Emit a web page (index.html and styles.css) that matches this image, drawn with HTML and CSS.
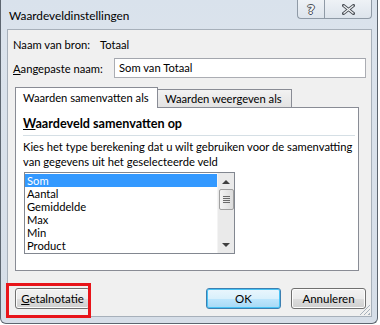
FILE: index.html
```html
<!DOCTYPE html>
<html lang="nl">
<head>
  <meta charset="UTF-8" />
  <title>Waardeveldinstellingen</title>
  <link rel="stylesheet" href="styles.css">
</head>
<body>
  <div class="window">
    <div class="titlebar">
      <span class="title">Waardeveldinstellingen</span>
      <div class="caption-buttons">
        <div class="cap-btn help">?</div>
        <div class="cap-btn close">
          <svg width="13" height="11" viewBox="0 0 13 11">
            <path d="M1.5 1.5 L11.5 9.5 M11.5 1.5 L1.5 9.5" stroke="#4a4f56" stroke-width="3" stroke-linecap="square"/>
            <path d="M1.5 1.5 L11.5 9.5 M11.5 1.5 L1.5 9.5" stroke="#f4f6f8" stroke-width="1.2"/>
          </svg>
        </div>
      </div>
    </div>

    <div class="client">
      <div class="row">
        <span class="label">Naam van bron:</span>
        <span class="value">Totaal</span>
      </div>
      <div class="row name-row">
        <span class="label"><u>A</u>angepaste naam:</span>
        <div class="textbox">Som van Totaal</div>
      </div>

      <div class="tabs">
        <div class="tab active">Waarden samenvatten als</div>
        <div class="tab">Waarden weergeven als</div>
      </div>
      <div class="panel">
        <div class="group-title"><u>W</u>aardeveld samenvatten op</div>
        <div class="separator"></div>
        <p class="desc">Kies het type berekening dat u wilt gebruiken voor de samenvatting<br>van gegevens uit het geselecteerde veld</p>
        <div class="listbox">
          <ul class="items">
            <li class="selected">Som</li>
            <li>Aantal</li>
            <li>Gemiddelde</li>
            <li>Max</li>
            <li>Min</li>
            <li>Product</li>
          </ul>
          <div class="scrollbar">
            <div class="arrow up"></div>
            <div class="thumb"><span></span><span></span><span></span><span></span></div>
            <div class="track"></div>
            <div class="arrow down"></div>
          </div>
        </div>
      </div>

      <div class="buttons">
        <div class="highlight"></div>
        <button class="btn"><u>G</u>etalnotatie</button>
        <div class="spacer"></div>
        <button class="btn default">OK</button>
        <button class="btn">Annuleren</button>
      </div>
      <div class="grip"></div>
    </div>
  </div>
</body>
</html>
```

FILE: styles.css
```css
* {
  box-sizing: border-box;
  margin: 0;
  padding: 0;
}
body {
  font-family: Lato, "Liberation Sans", sans-serif;
  font-size: 11.2px;
  color: #000;
  background: #fff;
  white-space: nowrap;
}
.window {
  width: 378px;
  height: 324px;
  border: 1px solid #5d6670;
  border-top: none;
  border-radius: 0 0 6px 6px;
  background: linear-gradient(#d9e2ec, #dbe3ec 40px, #d6dee8);
  padding: 0 5px 6px 6px;
  display: flex;
  flex-direction: column;
}
.titlebar {
  height: 29px;
  display: flex;
  align-items: flex-start;
}
.title {
  padding: 8px 0 0 2px;
  font-size: 11.8px;
}
.caption-buttons {
  margin-left: auto;
  display: flex;
  height: 19px;
}
.cap-btn {
  height: 19px;
  border: 1px solid #8f9aa6;
  border-top: none;
  background: linear-gradient(#eef2f6, #dde4ec);
  display: flex;
  align-items: center;
  justify-content: center;
}
.help {
  width: 27px;
  border-radius: 0 0 0 4px;
  border-right: none;
  font-family: "DejaVu Sans", sans-serif;
  font-weight: bold;
  font-size: 13px;
  color: #f4f6f8;
  text-shadow: 1px 0 0 #4a4f56, -1px 0 0 #4a4f56, 0 1px 0 #4a4f56, 0 -1px 0 #4a4f56;
}
.close {
  width: 48px;
  border-radius: 0 0 4px 0;
}
.client {
  flex: 1;
  position: relative;
  background: #f0f0f0;
  border: 1px solid #a7b0ba;
  padding: 6px 5px 0 5px;
  display: flex;
  flex-direction: column;
}
.row {
  display: flex;
  align-items: center;
  height: 16px;
}
.row .label {
  width: 87px;
}
.name-row {
  margin-top: 6px;
  height: 20px;
}
.name-row .label {
  width: 101px;
}
.textbox {
  flex: 1;
  height: 20px;
  background: #fff;
  border: 1px solid #abadb3;
  border-top-color: #a3a6ad;
  padding: 1px 4px;
  line-height: 16px;
}
.tabs {
  margin: 9px 0 0 2px;
  display: flex;
  align-items: flex-end;
  position: relative;
  z-index: 1;
}
.tab {
  height: 18px;
  padding: 0 9px 0 7px;
  border: 1px solid #898c95;
  border-bottom: none;
  background: linear-gradient(#f2f2f2, #e3e3e3);
  line-height: 17px;
  margin-left: -1px;
}
.tab.active {
  width: 143px;
  height: 21px;
  margin-left: 0;
  margin-bottom: -1px;
  padding: 1px 6px 0 7px;
  background: #fff;
}
.panel {
  margin: 0 7px 0 2px;
  height: 164px;
  background: #fff;
  border: 1px solid #898c95;
  padding: 8px 3px 0 7px;
}
.group-title {
  font-weight: bold;
  font-size: 12.6px;
  line-height: 16px;
}
.separator {
  height: 1px;
  background: #d5dfe5;
  margin: 3px 0 3px 0;
}
.desc {
  line-height: 15px;
}
.listbox {
  margin: 3px 0 0 1px;
  width: 211px;
  height: 82px;
  border: 1px solid #828790;
  display: flex;
  background: #fff;
}
.items {
  list-style: none;
  flex: 1;
  padding-top: 1px;
}
.items li {
  height: 13px;
  line-height: 13px;
  padding-left: 2px;
}
.items li.selected {
  background: #3399ff;
  color: #fff;
}
.scrollbar {
  width: 17px;
  background: #eaeaea;
  border-left: 1px solid #f4f4f4;
  display: flex;
  flex-direction: column;
  align-items: center;
}
.arrow {
  width: 0;
  height: 0;
  border-left: 4px solid transparent;
  border-right: 4px solid transparent;
}
.arrow.up {
  margin-top: 7px;
  border-bottom: 4px solid #404040;
}
.arrow.down {
  margin-bottom: 6px;
  border-top: 4px solid #404040;
}
.thumb {
  margin-top: 5px;
  width: 15px;
  height: 21px;
  border: 1px solid #a0a0a0;
  border-radius: 2px;
  background: linear-gradient(90deg, #f3f3f3, #dcdcdc);
  display: flex;
  flex-direction: column;
  justify-content: center;
  align-items: center;
  gap: 1px;
}
.thumb span {
  width: 7px;
  height: 1px;
  background: #6a6a6a;
}
.track {
  flex: 1;
}
.buttons {
  position: relative;
  margin: 17px 0 0 2px;
  display: flex;
  gap: 10px;
}
.spacer {
  flex: 1;
}
.btn {
  width: 75px;
  height: 21px;
  font-family: inherit;
  font-size: 11.5px;
  color: #000;
  border: 1px solid #707070;
  border-radius: 3px;
  background: linear-gradient(#f2f2f2 0%, #ebebeb 50%, #dddddd 51%, #cfcfcf 100%);
  box-shadow: inset 0 0 0 1px #fcfcfc;
}
.btn.default {
  border-color: #3c7fb1;
  background: linear-gradient(#eaf6fd 0%, #d9f0fc 50%, #bee6fd 51%, #a7d9f5 100%);
  box-shadow: inset 0 0 0 1px #48c3f5;
}
.highlight {
  position: absolute;
  left: -9px;
  top: -5px;
  width: 85px;
  height: 35px;
  border: 3px solid #e8141a;
}
.grip {
  position: absolute;
  right: 1px;
  bottom: 1px;
  width: 11px;
  height: 11px;
  background: repeating-linear-gradient(135deg, transparent 0 2px, #a8b2bc 2px 3px);
  clip-path: polygon(100% 0, 100% 100%, 0 100%);
}
```
